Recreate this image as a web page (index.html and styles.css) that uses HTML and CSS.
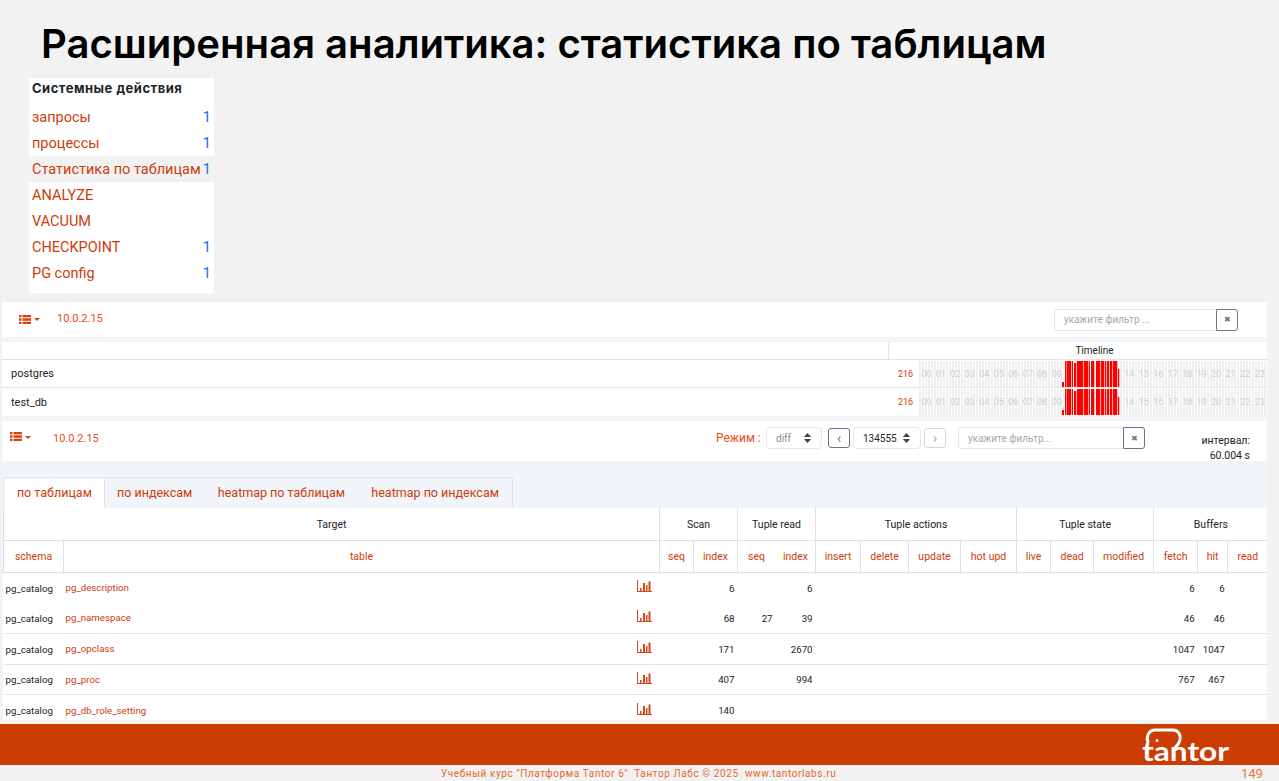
FILE: index.html
```html
<!DOCTYPE html>
<html lang="ru">
<head>
<meta charset="utf-8">
<title>Расширенная аналитика</title>
<link rel="stylesheet" href="styles.css">
</head>
<body>
<svg class="defs" width="0" height="0" aria-hidden="true">
  <symbol id="list" viewBox="0 0 12 9"><path d="M0 0h2.5v2.3H0zM3.5 0H12v2.3H3.500zM0 3.350h2.500v2.300H0zM3.500 3.350H12v2.300H3.500zM0 6.700h2.500V9H0zM3.500 6.700H12V9H3.500z"/></symbol>
  <symbol id="chart" viewBox="0 0 15 12"><path d="M0 0h1v11h14v1H0zM3 8h1.500v3H3zM6 3h2v8H6zM9 5h1.500v6H9zM11.500 1.500h2V11h-2z"/></symbol>
  <symbol id="updown" viewBox="0 0 9 11"><path d="M4.500 0 8.500 4.500H.5zM.5 6.500h8l-4 4.500z"/></symbol>
  <symbol id="bars" viewBox="0 0 348 26"><rect class="bars-bg" x="145" width="55" height="26"/><path d="M143 21h2v5h-2zM146 0h1.500v26H146zM148 0h4.300v26h-4.300zM153 0h1v26h-1zM155 2h2.300v24h-2.300zM158 0h6.300v26h-6.300zM165 0h4.300v26h-4.300zM170 0h1v26h-1zM172 0h3.300v26h-3.300zM177 0h4.300v26h-4.300zM182 0h3.300v26h-3.300zM186 0h1.300v26h-1.300zM188 0h2.300v26h-2.300zM191 0h2.300v26h-2.300zM194 0h4.300v26h-4.300zM199 8h1.300v18h-1.300z"/></symbol>
</svg>
<div class="slide">
  <h1 class="title">Расширенная аналитика: статистика по таблицам</h1>

  <nav class="panel">
    <div class="panel-head">Системные действия</div>
    <div class="panel-row"><span>запросы</span><b>1</b></div>
    <div class="panel-row"><span>процессы</span><b>1</b></div>
    <div class="panel-row active"><span>Статистика по таблицам</span><b>1</b></div>
    <div class="panel-row"><span>ANALYZE</span></div>
    <div class="panel-row"><span>VACUUM</span></div>
    <div class="panel-row"><span>CHECKPOINT</span><b>1</b></div>
    <div class="panel-row"><span>PG config</span><b>1</b></div>
  </nav>

  <main class="app">
    <section class="bar bar-one">
      <svg class="list-icon"><use href="#list"/></svg><i class="caret"></i>
      <span class="host host-one">10.0.2.15</span>
      <div class="filter filter-one"><span class="field">укажите фильтр ...</span><span class="clear">✖</span></div>
    </section>

    <section class="timeline">
      <div class="tl-head"><div class="tl-head-left"></div><div class="tl-head-right">Timeline</div></div>
      <div class="tl-row">
        <span class="db">postgres</span><span class="count">216</span>
        <div class="tl-cells">
          <span>00</span><span>01</span><span>02</span><span>03</span><span>04</span><span>05</span><span>06</span><span>07</span><span>08</span><span>09</span><span>10</span><span>11</span><span>12</span><span>13</span><span>14</span><span>15</span><span>16</span><span>17</span><span>18</span><span>19</span><span>20</span><span>21</span><span>22</span><span>23</span>
          <svg class="tl-bars"><use href="#bars"/></svg>
        </div>
      </div>
      <div class="tl-row">
        <span class="db">test_db</span><span class="count">216</span>
        <div class="tl-cells">
          <span>00</span><span>01</span><span>02</span><span>03</span><span>04</span><span>05</span><span>06</span><span>07</span><span>08</span><span>09</span><span>10</span><span>11</span><span>12</span><span>13</span><span>14</span><span>15</span><span>16</span><span>17</span><span>18</span><span>19</span><span>20</span><span>21</span><span>22</span><span>23</span>
          <svg class="tl-bars"><use href="#bars"/></svg>
        </div>
      </div>
    </section>

    <section class="bar bar-two">
      <svg class="list-icon"><use href="#list"/></svg><i class="caret"></i>
      <span class="host host-two">10.0.2.15</span>
      <span class="mode">Режим :</span>
      <div class="select select-mode"><span>diff</span><svg class="updown"><use href="#updown"/></svg></div>
      <span class="step step-prev">‹</span>
      <div class="select select-time"><span>134555</span><svg class="updown"><use href="#updown"/></svg></div>
      <span class="step step-next">›</span>
      <div class="filter filter-two"><span class="field">укажите фильтр...</span><span class="clear">✖</span></div>
      <div class="interval">интервал:<br>60.004 s</div>
    </section>

    <div class="tabs">
      <span class="tab tab-active">по таблицам</span>
      <span class="tab tab-mid">по индексам</span>
      <span class="tab tab-wide">heatmap по таблицам</span>
      <span class="tab tab-wide">heatmap по индексам</span>
    </div>

    <div class="table-clip">
      <table class="stats">
        <colgroup>
          <col class="c60"><col class="c596"><col class="c34"><col class="c44"><col class="c38"><col class="c40"><col class="c45"><col class="c48"><col class="c52"><col class="c56"><col class="c34"><col class="c43"><col class="c60"><col class="c44"><col class="c30"><col class="c40">
        </colgroup>
        <thead>
          <tr class="group">
            <th colspan="2">Target</th><th colspan="2">Scan</th><th colspan="2">Tuple read</th><th colspan="4">Tuple actions</th><th colspan="3">Tuple state</th><th colspan="3">Buffers</th>
          </tr>
          <tr class="cols">
            <th>schema</th><th>table</th><th>seq</th><th>index</th><th class="nb">seq</th><th>index</th><th>insert</th><th>delete</th><th>update</th><th>hot upd</th><th>live</th><th>dead</th><th>modified</th><th>fetch</th><th>hit</th><th>read</th>
          </tr>
        </thead>
        <tbody>
          <tr class="first">
            <td class="schema">pg_catalog</td><td class="tbl"><span>pg_description</span><svg class="chart"><use href="#chart"/></svg></td><td></td><td class="n">6</td><td></td><td class="n">6</td><td></td><td></td><td></td><td></td><td></td><td></td><td></td><td class="n">6</td><td class="n">6</td><td></td>
          </tr>
          <tr>
            <td class="schema">pg_catalog</td><td class="tbl"><span>pg_namespace</span><svg class="chart"><use href="#chart"/></svg></td><td></td><td class="n">68</td><td class="n">27</td><td class="n">39</td><td></td><td></td><td></td><td></td><td></td><td></td><td></td><td class="n">46</td><td class="n">46</td><td></td>
          </tr>
          <tr>
            <td class="schema">pg_catalog</td><td class="tbl"><span>pg_opclass</span><svg class="chart"><use href="#chart"/></svg></td><td></td><td class="n">171</td><td></td><td class="n">2670</td><td></td><td></td><td></td><td></td><td></td><td></td><td></td><td class="n">1047</td><td class="n">1047</td><td></td>
          </tr>
          <tr>
            <td class="schema">pg_catalog</td><td class="tbl"><span>pg_proc</span><svg class="chart"><use href="#chart"/></svg></td><td></td><td class="n">407</td><td></td><td class="n">994</td><td></td><td></td><td></td><td></td><td></td><td></td><td></td><td class="n">767</td><td class="n">467</td><td></td>
          </tr>
          <tr>
            <td class="schema">pg_catalog</td><td class="tbl"><span>pg_db_role_setting</span><svg class="chart"><use href="#chart"/></svg></td><td></td><td class="n">140</td><td></td><td></td><td></td><td></td><td></td><td></td><td></td><td></td><td></td><td></td><td></td><td></td>
          </tr>
        </tbody>
      </table>
    </div>
  </main>

  <footer class="footer">
    <div class="band">
      <svg class="logo" viewBox="0 0 90 38" width="90" height="38" role="img" aria-label="tantor">
        <path class="logo-arc" d="M6 15C4 11 6 3 13 3H31C37 3 39 9 38 13 37.500 15 36 18 33.500 20"/>
        <circle class="logo-dot" cx="15" cy="13.500" r="1.500"/>
        <text class="logo-text" x="0" y="34" textLength="87" lengthAdjust="spacingAndGlyphs">tantor</text>
      </svg>
    </div>
    <div class="legal">
      <span class="legal-text">Учебный курс "Платформа Tantor 6"  Тантор Лабс © 2025  www.tantorlabs.ru</span>
      <span class="page">149</span>
    </div>
  </footer>
</div>
</body>
</html>
```

FILE: styles.css
```css
* { box-sizing: border-box; }
html, body { margin: 0; padding: 0; }
body {
  width: 1279px;
  height: 781px;
  overflow: hidden;
  background: #f2f2f2;
  font-family: Roboto, "Liberation Sans", sans-serif;
  color: #212529;
}
.defs { display: block; height: 0; }
.slide { display: flex; flex-direction: column; height: 781px; }

.title {
  margin: 0;
  height: 78px;
  padding: 20px 0 0 41px;
  font: 600 40.100px/48px Inter, Roboto, sans-serif;
  color: #000;
  white-space: nowrap;
}

.panel {
  width: 185px;
  height: 215px;
  margin-left: 29px;
  background: #fff;
  font-size: 14px;
  color: #cc3d0a;
}
.panel-head {
  height: 26px;
  padding: 0 0 0 3px;
  font: 700 13px/20px Inter, sans-serif;
  letter-spacing: 0.500px;
  white-space: nowrap;
  color: #212529;
}
.panel-row {
  display: flex;
  justify-content: space-between;
  align-items: center;
  height: 26px;
  padding: 0 3px;
  white-space: nowrap;
  font-family: Roboto, sans-serif;
  font-size: 14.500px;
}
.panel-row b { font-weight: 400; color: #0d6efd; }
.panel-row.active { background: #f2f2f2; }

.app {
  width: 1265px;
  height: 418px;
  margin: 9px 0 0 2px;
  background: #f1f4f9;
  display: flex;
  flex-direction: column;
  overflow: hidden;
}
.bar { display: flex; background: #fff; flex: none; }
.bar-one { height: 35px; align-items: center; padding-left: 17px; }
.list-icon { width: 12px; height: 9px; fill: #d9400f; flex: none; }
.caret {
  width: 0; height: 0; margin-left: 3px;
  border: 3px solid transparent;
  border-top: 3px solid #d9400f;
  border-bottom: 0;
  flex: none;
}
.host { color: #f04a10; font-size: 11px; }
.host-one { margin-left: 17px; width: 44px; padding-bottom: 2px; }
.filter { display: flex; height: 22px; font-size: 10px; }
.filter-one { margin-left: 953px; width: 184px; }
.field {
  flex: 1;
  display: flex;
  align-items: center;
  padding-left: 9px;
  border: 1px solid #e3e6ea;
  border-right: 0;
  border-radius: 3px 0 0 3px;
  color: #a8a8a8;
  background: #fff;
}
.clear {
  width: 22px;
  display: flex;
  align-items: center;
  justify-content: center;
  border: 1px solid #6c757d;
  border-radius: 0 3px 3px 0;
  color: #6c757d;
  font-size: 8px;
}

.timeline { margin-top: 5px; background: #fff; height: 74px; flex: none; }
.tl-head { display: flex; height: 18px; border-bottom: 1px solid #e3e3e3; font-size: 10px; line-height: 18px; color: #212529; }
.tl-head-left { width: 887px; border-right: 1px solid #e3e3e3; }
.tl-head-right { flex: 1; text-align: center; padding-left: 33px; }
.tl-row {
  display: flex;
  align-items: center;
  height: 28px;
  border-bottom: 1px solid #e3e3e3;
  font-size: 11px;
  padding-left: 9px;
}
.tl-row:last-child { border-bottom: 0; }
.db { width: 887px; }
.count { width: 16px; color: #cc3d0a; font-size: 9px; }
.tl-cells {
  position: relative;
  display: flex;
  flex: 1;
  align-self: stretch;
  margin: 1px 0 0 5px;
  background: repeating-linear-gradient(90deg, #efefef 0 2px, #fff 2px 3px);
  color: #cfcfcf;
  font-size: 9px;
}
.tl-cells > span { width: 14.500px; text-align: center; line-height: 26px; flex: none; }
.tl-bars { position: absolute; left: 0; top: 0; width: 348px; height: 26px; fill: #f00; }
.bars-bg { fill: #fff; }

.bar-two {
  height: 40px;
  margin: 5px 0 0 1px;
  padding: 6px 0 0 7px;
  align-items: flex-start;
  font-size: 11px;
}
.bar-two .list-icon { margin-top: 5px; }
.bar-two .caret { margin-top: 9px; }
.host-two { margin-left: 22px; margin-top: 5px; width: 44px; }
.mode { margin: 4px 0 0 619px; color: #f04a10; font-size: 12px; width: 50px; }
.select {
  display: flex;
  align-items: center;
  justify-content: space-between;
  height: 22px;
  padding: 0 9px;
  border: 1px solid #e6e8ec;
  border-radius: 4px;
  font-size: 10px;
}
.select-mode { width: 56px; color: #888; }
.select-time { width: 68px; margin-left: 3px; }
.updown { width: 9px; height: 10px; fill: #444; flex: none; }
.step {
  width: 22px; height: 20px; margin-top: 1px;
  display: flex; align-items: center; justify-content: center;
  border-radius: 3px; font-size: 14px;
}
.step-prev { margin-left: 6px; border: 1px solid #6c757d; color: #6c757d; }
.step-next { margin-left: 3px; border: 1px solid #d4d7db; color: #aaa; }
.filter-two { margin-left: 12px; width: 187px; }
.interval { width: 105px; text-align: right; font-size: 10.500px; line-height: 15px; margin-top: 6px; }

.tabs {
  display: flex;
  flex: none;
  width: 510px;
  height: 31px;
  margin: 16px 0 0 1px;
  padding: 1px 0 0 1px;
  border: 1px solid #e3e6ea;
  border-bottom: 0;
  font-size: 12.500px;
  color: #cc3d0a;
}
.tab { display: flex; align-items: center; justify-content: center; white-space: nowrap; padding-bottom: 2px; }
.tab-active { width: 100px; background: #fff; border-right: 1px solid #e3e6ea; }
.tab-mid { width: 100px; }
.tab-wide { width: 154px; }

.table-clip { flex: 1; margin-left: 1px; min-height: 0; overflow: hidden; background: #fff; }
.stats { width: 1264px; table-layout: fixed; border-collapse: collapse; font-size: 10px; }
.c60 { width: 60px; } .c596 { width: 596px; } .c34 { width: 34px; } .c44 { width: 44px; }
.c38 { width: 38px; } .c40 { width: 40px; } .c45 { width: 45px; } .c48 { width: 48px; }
.c52 { width: 52px; } .c56 { width: 56px; } .c43 { width: 43px; } .c30 { width: 30px; }
.stats th { padding: 0; font-weight: 400; text-align: center; border: 1px solid #dfe0e3; border-top: 0; font-size: 10.500px; }
.stats th:last-child { border-right: 0; }
.group th { height: 32px; padding-top: 1px; color: #212529; }
.cols th { height: 32px; color: #cc3d0a; }
.cols th.nb { border-right-color: transparent; }
.stats td { height: 30.700px; padding: 1px 0 0; border-bottom: 1px solid #e2e2e9; font-size: 9.700px; white-space: nowrap; }
.first td { border-bottom: 0; }
.stats .schema { padding-left: 2px; }
.stats .tbl { color: #cc3d0a; padding-left: 2px; padding-right: 8px; }
.tbl span { float: left; line-height: 14px; }
.chart { float: right; width: 15px; height: 12px; margin-top: -1px; fill: #d24a1c; }
.stats .n { text-align: right; padding-right: 3px; }

.footer { margin-top: 4px; flex: none; }
.band { height: 41px; background: #cc3d03; display: flex; justify-content: flex-end; padding: 3px 47px 0 0; }
.logo { display: block; overflow: visible; }
.logo-arc { fill: none; stroke: #fff; stroke-width: 3px; stroke-linecap: round; }
.logo-dot { fill: #fff; }
.logo-text { font: 700 27px Lato, sans-serif; fill: #fff; }
.legal { display: flex; height: 16px; align-items: center; padding-left: 441px; color: #e46a2c; }
.legal-text { font-size: 10px; letter-spacing: 0.600px; white-space: pre; width: 800px; }
.page { font-size: 13px; color: #e8783c; }
```
